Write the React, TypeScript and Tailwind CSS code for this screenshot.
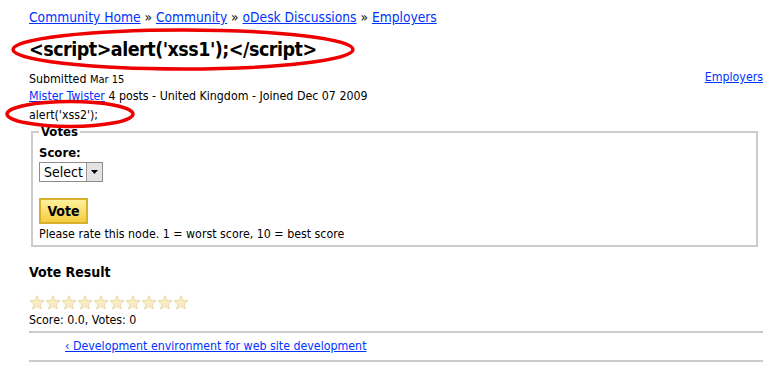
import React from 'react';

const font = "font-['Tahoma','DejaVu_Sans_Condensed','DejaVu_Sans',sans-serif]";

const Star: React.FC = () => (
  <svg width="16" height="15" viewBox="0 0 16 15">
    <path
      d="M8 0.8 L10.1 5.3 L15 5.8 L11.3 9.1 L12.4 14 L8 11.5 L3.6 14 L4.7 9.1 L1 5.8 L5.9 5.3 Z"
      fill="#f9ebc2"
      stroke="#ecdcae"
      strokeWidth="1"
      strokeLinejoin="round"
    />
  </svg>
);

export default function App() {
  return (
    <div className={`${font} relative w-[777px] h-[366px] overflow-hidden bg-white text-black pl-[29px] pr-[14px] pt-[9px]`}>
      {/* Breadcrumb */}
      <div className="text-[13.7px] leading-[17px] text-[#0033ff]">
        <a className="underline" href="#">Community Home</a>
        <span className="text-black"> » </span>
        <a className="underline" href="#">Community</a>
        <span className="text-black"> » </span>
        <a className="underline" href="#">oDesk Discussions</a>
        <span className="text-black"> » </span>
        <a className="underline" href="#">Employers</a>
      </div>

      <h1 className="mt-[12px] text-[19.5px] tracking-[-0.5px] leading-[24px] font-bold">{"<script>alert('xss1');</script>"}</h1>

      <div className="mt-[9px] flex justify-between text-[12.3px] leading-[16px]">
        <div>
          <div>
            Submitted <span className="text-[11px]">Mar 15</span>
          </div>
          <div>
            <a className="underline text-[#0033ff]" href="#">Mister Twister</a> 4 posts - United Kingdom - Joined Dec 07 2009
          </div>
        </div>
        <a className="underline text-[#0033ff] mt-[-2px]" href="#">Employers</a>
      </div>

      <div className="mt-[3px] text-[12.3px] leading-[16px]">alert('xss2');</div>

      {/* Votes */}
      <fieldset className="mt-[2px] ml-[2px] mr-[5px] border-2 border-[#cccccc] px-[6px] pb-[2px]">
        <legend className="text-[13px] font-bold leading-[14px] px-[2px]">Votes</legend>
        <div className="mt-[6px] text-[13px] font-bold leading-[16px]">Score:</div>
        <div className="mt-[1px] flex">
          <div className="flex items-stretch h-[20px] border border-[#8c8c8c] bg-white">
            <span className="text-[14px] leading-[18px] pl-[4px] pr-[3px]">Select</span>
            <span className="w-[16px] flex items-center justify-center bg-[#e3e3e3] border-l border-[#9a9a9a]">
              <svg width="7" height="4" viewBox="0 0 7 4">
                <path d="M0 0 L7 0 L3.5 4 Z" fill="#000" />
              </svg>
            </span>
          </div>
        </div>
        <button className="mt-[16px] w-[49px] h-[26px] border-2 border-[#d9b02c] bg-gradient-to-b from-[#fff29a] to-[#f3cb3c] text-[14px] font-bold leading-[20px]">
          Vote
        </button>
        <div className="mt-[1px] text-[12.3px] leading-[18px]">Please rate this node. 1 = worst score, 10 = best score</div>
      </fieldset>

      <h3 className="mt-[16px] text-[14px] font-bold leading-[18px]">Vote Result</h3>
      <div className="mt-[14px] flex">
        {Array.from({ length: 10 }).map((_, i) => (
          <Star key={i} />
        ))}
      </div>
      <div className="mt-[2px] text-[12.3px] leading-[16px]">Score: 0.0, Votes: 0</div>

      <div className="mt-[3px] h-[2px] bg-[#cccccc]" />
      <div className="pl-[36px] py-[6px] text-[12.3px] leading-[15px]">
        <a className="underline text-[#0033ff]" href="#">‹ Development environment for web site development</a>
      </div>
      <div className="h-[2px] bg-[#cccccc]" />

      {/* red annotation ellipses */}
      <svg className="absolute left-[10px] top-[27px] pointer-events-none" width="346" height="45" viewBox="0 0 346 45">
        <ellipse cx="173" cy="22.5" rx="170" ry="19.5" fill="none" stroke="#ee0000" strokeWidth="3.5" />
      </svg>
      <svg className="absolute left-[4px] top-[98px] pointer-events-none" width="132" height="32" viewBox="0 0 132 32">
        <ellipse cx="66" cy="16" rx="63" ry="12.5" fill="none" stroke="#ee0000" strokeWidth="3.5" />
      </svg>
    </div>
  );
}
